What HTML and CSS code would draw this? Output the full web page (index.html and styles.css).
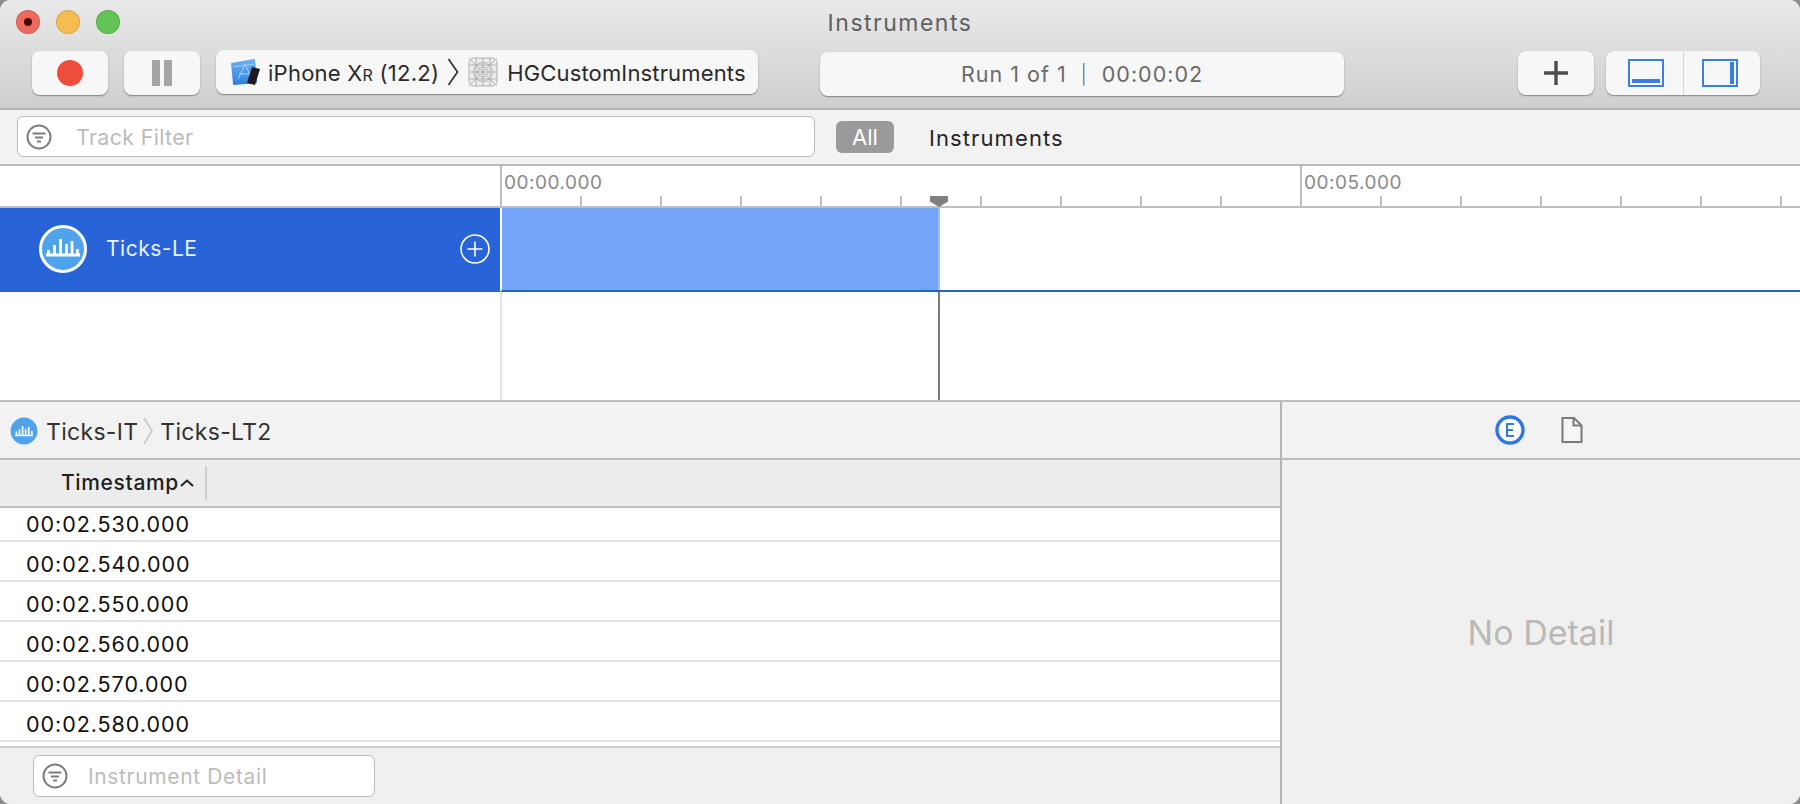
FILE: index.html
```html
<!DOCTYPE html>
<html lang="en">
<head>
<meta charset="utf-8">
<title>Instruments</title>
<link rel="stylesheet" href="styles.css">
</head>
<body>
<div class="window">
  <header class="toolbar">
    <div class="titlebar">
      <div class="lights">
        <span class="light red"><i></i></span>
        <span class="light yellow"></span>
        <span class="light green"></span>
      </div>
      <div class="title">Instruments</div>
      <div></div>
    </div>
    <div class="controls">
      <button class="btn btn-icon"><span class="rec"></span></button>
      <button class="btn btn-icon"><span class="pause"><i></i><i></i></span></button>
      <div class="btn scheme">
        <svg class="dev-icon" width="32" height="28" viewBox="0 0 32 28">
          <defs><linearGradient id="xc" x1="0" y1="0" x2="0" y2="1"><stop offset="0" stop-color="#6ab2f2"/><stop offset="1" stop-color="#2f7fe0"/></linearGradient></defs>
          <path d="M2 5 L25 1 Q26 1 26 2 L28 24 Q28 25 27 25 L5 27 Q4 27 4 26 Z" fill="url(#xc)"/>
          <path d="M9 21 L16 6 L22 19 M10 16 H22 M4 9 L25 6" stroke="#a9d3f7" stroke-width="1" fill="none"/>
          <path d="M23 9 L31 11 L26 27 L18 25 Z" fill="#1b1b1f"/>
        </svg>
        <span class="dev-name">iPhone X<small>R</small> (12.2)</span>
        <svg class="chev" width="12" height="28" viewBox="0 0 12 28"><path d="M1.500 1 L10.500 14 L1.500 27" fill="none" stroke="#2b2b2b" stroke-width="1.600"/></svg>
        <svg class="grid-icon" width="30" height="30" viewBox="0 0 30 30" fill="none" stroke="#b0b0b0" stroke-width="1">
          <rect x="1" y="1" width="28" height="28" rx="5" fill="#ececec"/>
          <circle cx="15" cy="15" r="9.500"/><circle cx="15" cy="15" r="5"/>
          <path d="M1 1 L29 29 M29 1 L1 29 M15 1 V29 M1 15 H29 M8 1 V29 M22 1 V29 M1 8 H29 M1 22 H29"/>
        </svg>
        <span class="target">HGCustomInstruments</span>
      </div>
      <div class="btn run">Run 1 of 1&nbsp;&nbsp;<span class="bar">|</span>&nbsp;&nbsp;00:00:02</div>
      <button class="btn btn-plus">
        <svg width="26" height="26" viewBox="0 0 26 26"><path d="M13 1 V25 M1 13 H25" stroke="#4d4d4d" stroke-width="3.400"/></svg>
      </button>
      <div class="btn seg">
        <span class="seg-item seg-left">
          <svg width="36" height="28" viewBox="0 0 36 28"><rect x="1" y="1" width="34" height="26" fill="none" stroke="#3b7de0" stroke-width="2"/><rect x="4" y="20" width="28" height="4" fill="#3b7de0"/></svg>
        </span>
        <span class="seg-item seg-right">
          <svg width="36" height="28" viewBox="0 0 36 28"><rect x="1" y="1" width="34" height="26" fill="none" stroke="#3b7de0" stroke-width="2"/><rect x="28" y="3" width="4" height="22" fill="#3b7de0"/></svg>
        </span>
      </div>
    </div>
  </header>

  <div class="filterbar">
    <div class="field track-field">
      <svg class="filter-icon" width="26" height="26" viewBox="0 0 26 26"><circle cx="13" cy="13" r="11.500" fill="none" stroke="#7d7d7d" stroke-width="2"/><path d="M6.500 9.500 H19.500 M9 13.500 H17 M11 17.500 H15" stroke="#7d7d7d" stroke-width="2"/></svg>
      <span class="placeholder">Track Filter</span>
    </div>
    <span class="all">All</span>
    <span class="scope">Instruments</span>
  </div>

  <section class="timeline">
    <div class="ruler">
      <div class="ruler-side"></div>
      <div class="ruler-major"><span>00:00.000</span></div>
      <div class="ruler-major"><span>00:05.000</span></div>
    </div>
    <div class="track">
      <div class="track-head">
        <svg width="50" height="50" viewBox="0 0 50 50">
          <circle cx="25" cy="25" r="22.500" fill="#4fa3ea" stroke="#fff" stroke-width="3"/>
          <path d="M8 31 H42 M10.500 31 V26 M16.500 31 V21 M22.500 31 V15 M28.500 31 V20 M34 31 V17 M39.500 31 V25" stroke="#fff" stroke-width="2.800" fill="none"/>
        </svg>
        <span class="track-name">Ticks-LE</span>
        <span class="track-add">
          <svg width="30" height="30" viewBox="0 0 30 30"><circle cx="15" cy="15" r="14" fill="none" stroke="#fff" stroke-width="1.600"/><path d="M15 7.500 V22.500 M7.500 15 H22.500" stroke="#fff" stroke-width="1.600"/></svg>
        </span>
      </div>
      <div class="track-body"><div class="track-fill"></div></div>
    </div>
    <div class="track-empty"><div class="track-empty-side"></div></div>
    <div class="playhead"></div>
  </section>

  <section class="bottom">
    <div class="detail">
      <div class="crumbs">
        <svg width="28" height="28" viewBox="0 0 50 50">
          <circle cx="25" cy="25" r="24" fill="#4fa3ea"/>
          <path d="M9 33 H41 M11.500 32 V26 M17 32 V22 M22.500 32 V16 M28 32 V22 M33.500 32 V18 M39 32 V25" stroke="#fff" stroke-width="3" fill="none"/>
        </svg>
        <span class="crumb crumb-first">Ticks-IT</span>
        <svg width="12" height="28" viewBox="0 0 12 28"><path d="M2 1 L10 14 L2 27" fill="none" stroke="#c8c8c8" stroke-width="1.600"/></svg>
        <span class="crumb">Ticks-LT2</span>
      </div>
      <div class="thead">
        <span class="th">Timestamp</span>
        <svg class="caret" width="14" height="8" viewBox="0 0 14 8"><path d="M1 7 L7 1.500 L13 7" fill="none" stroke="#222" stroke-width="2"/></svg>
        <span class="th-sep"></span>
      </div>
      <div class="rows">
        <div class="row first">00:02.530.000</div>
        <div class="row">00:02.540.000</div>
        <div class="row">00:02.550.000</div>
        <div class="row">00:02.560.000</div>
        <div class="row">00:02.570.000</div>
        <div class="row">00:02.580.000</div>
      </div>
      <div class="footer">
        <div class="field detail-field">
          <svg class="filter-icon" width="26" height="26" viewBox="0 0 26 26"><circle cx="13" cy="13" r="11.500" fill="none" stroke="#7d7d7d" stroke-width="2"/><path d="M6.500 9.500 H19.500 M9 13.500 H17 M11 17.500 H15" stroke="#7d7d7d" stroke-width="2"/></svg>
          <span class="placeholder small">Instrument Detail</span>
        </div>
      </div>
    </div>
    <aside class="inspector">
      <div class="insp-tabs">
        <svg width="30" height="30" viewBox="0 0 30 30"><circle cx="15" cy="15" r="13" fill="#fff" stroke="#2f78e4" stroke-width="3.400"/><path d="M19 9 H12 V21 H19 M12 15 H18" fill="none" stroke="#3d7ad8" stroke-width="2.200"/></svg>
        <svg width="22" height="26" viewBox="0 0 22 26"><path d="M1.500 1 H13 L20.500 8.500 V25 H1.500 Z" fill="#f6f6f6" stroke="#7b7b7b" stroke-width="2"/><path d="M12.500 1 V8.500 H20.500" fill="none" stroke="#7b7b7b" stroke-width="2"/></svg>
      </div>
      <div class="no-detail">No Detail</div>
    </aside>
  </section>
</div>
</body>
</html>
```

FILE: styles.css
```css
* { box-sizing: border-box; }
html, body { margin: 0; padding: 0; height: 100%; background: #8d8d90; }
body { font-family: Inter, "Liberation Sans", sans-serif; overflow: hidden; }

.window {
  width: 1800px;
  height: 804px;
  border-radius: 11px;
  overflow: hidden;
  background: #fff;
  display: flex;
  flex-direction: column;
}

/* toolbar */
.toolbar {
  height: 110px;
  flex: none;
  background: linear-gradient(#e9e9e9, #cfcfcf);
  border-bottom: 2px solid #b4b4b4;
}
.titlebar {
  height: 44px;
  display: grid;
  grid-template-columns: 1fr auto 1fr;
  align-items: center;
}
.lights { display: flex; gap: 16px; padding-left: 16px; }
.light {
  width: 24px; height: 24px; border-radius: 50%;
  display: flex; align-items: center; justify-content: center;
  box-shadow: inset 0 0 0 1px rgba(0, 0, 0, .12);
}
.light i { width: 8px; height: 8px; border-radius: 50%; background: #4a0505; }
.red { background: #ee6a5f; }
.yellow { background: #f5bd4f; }
.green { background: #61c454; }
.title { padding-top: 2px; font-size: 23px; color: #606060; letter-spacing: 1.500px; }

.controls {
  display: flex;
  align-items: flex-start;
  padding: 6px 40px 0 32px;
}
.btn {
  background: #f7f7f7;
  border: 0;
  padding: 0;
  border-radius: 8px;
  box-shadow: 0 1px 1.500px rgba(0, 0, 0, .38);
  font-family: inherit;
}
.btn-icon {
  width: 76px; height: 44px; margin-top: 1px; margin-right: 16px;
  display: flex; align-items: center; justify-content: center;
}
.rec { width: 26px; height: 26px; border-radius: 50%; background: #ee4c3c; }
.pause { display: flex; gap: 4px; }
.pause i { width: 8px; height: 26px; background: #a5a5a5; }

.scheme {
  width: 542px; height: 44px; margin-right: 62px;
  display: flex; align-items: center;
  padding-left: 13px;
  color: #2a2a2a;
  font-size: 22px;
  letter-spacing: .15px;
}
.dev-icon { flex: none; }
.dev-name { margin: 1px 0 0 7px; white-space: nowrap; letter-spacing: .25px; }
.dev-name small { font-size: 16px; }
.chev { margin: 0 9px 0 8px; flex: none; }
.grid-icon { flex: none; }
.target { margin: 1px 0 0 9px; white-space: nowrap; }

.run {
  width: 524px; height: 44px; margin-top: 2px; margin-right: 174px;
  display: flex; align-items: center; justify-content: center;
  color: #6a6a6a; font-size: 21.500px; letter-spacing: 1px;
  white-space: pre;
}
.bar { font-weight: 300; font-size: 19px; }
.btn-plus {
  width: 76px; height: 44px; margin-top: 1px; margin-right: 12px;
  display: flex; align-items: center; justify-content: center;
}
.seg { width: 154px; height: 44px; margin-top: 1px; display: flex; }
.seg-item { flex: 1; display: flex; align-items: center; justify-content: center; }
.seg-left { padding-left: 3px; }
.seg-right { padding-right: 3px; border-left: 1px solid #d6d6d6; }

/* filter bar */
.filterbar {
  height: 56px;
  flex: none;
  background: #f2f2f2;
  border-bottom: 2px solid #b9b9b9;
  display: flex;
  align-items: flex-start;
  padding: 6px 0 0 17px;
}
.field {
  background: #fff;
  border: 1px solid #bdbdbd;
  border-radius: 6px;
  display: flex;
  align-items: center;
}
.track-field { width: 798px; height: 41px; padding-left: 8px; }
.filter-icon { flex: none; }
.placeholder { margin: 1px 0 0 24px; color: #bcbcbc; font-size: 21.500px; letter-spacing: .3px; }
.placeholder.small { margin: 0 0 0 20px; font-size: 21px; letter-spacing: .65px; }
.all {
  margin: 5px 0 0 21px;
  width: 58px; height: 32px;
  border-radius: 6px;
  background: #9a9a9a;
  color: #fff;
  font-size: 22px;
  display: flex; align-items: center; justify-content: center;
}
.scope { margin: 9px 0 0 35px; font-size: 22px; letter-spacing: 1.100px; color: #262626; }

/* timeline */
.timeline { position: relative; flex: none; height: 234px; }
.ruler {
  height: 42px;
  display: flex;
  border-bottom: 2px solid #bfbfbf;
}
.ruler-side { width: 500px; flex: none; }
.ruler-major {
  width: 800px;
  flex: none;
  border-left: 2px solid #bdbdbd;
  padding: 5px 0 0 2px;
  font-size: 19px;
  letter-spacing: .5px;
  color: #8a8a8a;
  background: repeating-linear-gradient(90deg, transparent 0, transparent 78px, #bdbdbd 78px, #bdbdbd 80px) 0 100% / 100% 10px no-repeat;
}
.track { height: 84px; display: flex; }
.track-head {
  width: 500px; flex: none;
  background: #2864d8;
  display: flex; align-items: center;
  padding: 0 0 2px 38px;
  color: #eaf1fd;
}
.track-name { margin: 0 0 2px 18px; font-size: 21px; letter-spacing: .5px; }
.track-add {
  margin-left: auto;
  width: 53px; height: 100%;
  border-left: 1px solid #2560cf;
  display: flex; align-items: center; padding-left: 12px;
}
.track-body {
  flex: 1;
  border-left: 2px solid #fff;
  border-bottom: 2px solid #2a5fc4;
  background: #fff;
}
.track-fill { width: 438px; height: 100%; background: #73a5f8; border-right: 2px solid #9cbdf7; }
.track-empty { height: 108px; background: #fff; }
.track-empty-side { width: 502px; height: 100%; border-right: 2px solid #e4e4e4; }
.playhead {
  position: absolute;
  left: 938px; top: 126px; bottom: 0;
  width: 2px;
  background: #7c7c7c;
}
.playhead::before {
  content: "";
  position: absolute;
  left: -8px; top: -96px;
  width: 18px; height: 11px;
  background: #808080;
  clip-path: polygon(0 0, 100% 0, 100% 50%, 50% 100%, 0 50%);
}

/* bottom */
.bottom {
  flex: 1;
  min-height: 0;
  display: flex;
  border-top: 2px solid #bcbcbc;
}
.detail {
  width: 1282px;
  flex: none;
  display: flex;
  flex-direction: column;
  border-right: 2px solid #b4b4b4;
}
.crumbs {
  height: 58px;
  flex: none;
  background: #f2f2f2;
  border-bottom: 2px solid #bcbcbc;
  display: flex; align-items: center;
  padding: 1px 0 0 10px;
  gap: 6px;
  font-size: 23px;
  letter-spacing: .3px;
  color: #333;
}
.crumb { padding-top: 2px; }
.crumb-first { margin-left: 2px; margin-right: -2px; }
.thead {
  height: 48px;
  flex: none;
  background: #ececec;
  border-bottom: 2px solid #c0c0c0;
  display: flex; align-items: center;
  padding: 0 0 1px 61px;
  font-size: 21px;
  font-weight: 500;
  letter-spacing: .65px;
  color: #1f1f1f;
}
.caret { margin-left: 1px; }
.th-sep { width: 2px; height: 34px; background: #d0d0d0; margin-left: 11px; }
.rows { flex: 1; min-height: 0; background: #fff; }
.row {
  height: 40px;
  display: flex; align-items: flex-end;
  padding: 0 0 4px 26px;
  border-bottom: 2px solid #e4e4e4;
  font-size: 21.500px;
  letter-spacing: .95px;
  line-height: 24px;
  color: #111;
}
.row.first { height: 34px; }
.footer {
  height: 58px;
  flex: none;
  background: #f0f0f0;
  border-top: 2px solid #cdcdcd;
  padding: 7px 0 0 33px;
}
.detail-field { width: 342px; height: 42px; padding-left: 8px; }

.inspector { flex: 1; display: flex; flex-direction: column; background: #f0f0f0; }
.insp-tabs {
  height: 58px;
  flex: none;
  background: #f2f2f2;
  border-bottom: 2px solid #bcbcbc;
  display: flex; align-items: center;
  padding-left: 213px;
  gap: 36px;
}
.no-detail {
  flex: 1;
  display: flex; align-items: center; justify-content: center;
  font-size: 34px;
  color: #b9b9b9;
}
```
